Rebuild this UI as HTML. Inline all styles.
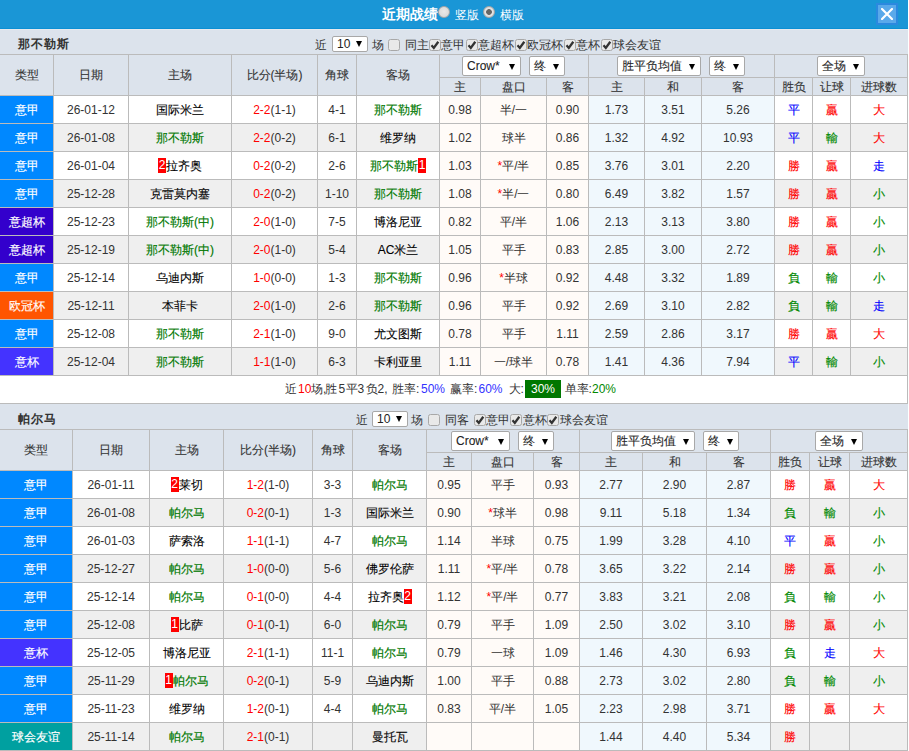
<!DOCTYPE html><html><head><meta charset="utf-8"><style>
*{margin:0;padding:0;box-sizing:border-box}
html,body{width:909px;height:751px;overflow:hidden;background:#fff}
body{position:relative;font-family:"Liberation Sans",sans-serif;font-size:12px;color:#333}
#topbar{position:absolute;left:0;top:0;width:908px;height:29px;background:#1a96d6;border-bottom:1px solid #0b8fd4}
#ttl{position:absolute;left:382px;top:5px;font-size:14px;font-weight:bold;color:#fff;line-height:18px}
.rad{position:absolute;top:6px;width:12px;height:12px;border-radius:50%;background:radial-gradient(circle at 50% 45%,#e8e8e8,#d4d4d4);border:1px solid #a6a6a6;}
.rad.on{background:radial-gradient(circle,#666 0,#666 2.5px,#e6e6e6 3.2px,#d0d0d0 6px)}
.rl{position:absolute;top:8px;color:#fff;font-size:12px;line-height:14px}
#close{position:absolute;left:876px;top:3px;width:22px;height:22px;background:#5aa9ea;border:2px solid #2b89df}
#close svg{position:absolute;left:3px;top:3px}
.tbar{position:absolute;left:0;width:908px;height:25px;background:#dce3ec;border-top:1px solid #e6e9ee}
.tn{position:absolute;left:18px;font-size:12px;letter-spacing:1px;font-weight:bold;color:#333;line-height:16px}
.bt{position:absolute;line-height:16px;color:#333;white-space:nowrap}
.ctl{position:absolute;top:6px;white-space:nowrap;line-height:16px;color:#333}
.grid{position:absolute;background:#bbbbbb}
.c{position:absolute;text-align:center;white-space:nowrap;overflow:hidden}
.h{color:#333;-webkit-text-stroke:0.1px #333}
.res span{-webkit-text-stroke:0.15px currentColor}
.hs{}
.sel{display:inline-block;position:relative;height:20px;background:#fff;border:1px solid #a8a8a8;border-radius:2px;text-align:left;line-height:18px;color:#222;flex:none}
.sel .st{position:absolute;left:4px;top:0}
.sel .ar{position:absolute;right:5px;top:7px;width:0;height:0;border-left:3.5px solid transparent;border-right:3.5px solid transparent;border-top:6px solid #000}
.sel.sm{height:16px;margin:0;line-height:14px}
.sel.sm .ar{top:4px;right:5px}
.cbw{position:absolute;width:12px;height:12px}.cbw svg{display:block}
.cb{display:inline-block;width:12px;height:12px;border:1px solid #a9a9a9;border-radius:2px;background:#e8e8e8;vertical-align:-1px;position:relative}
.cb.on::after{content:"";position:absolute;left:3px;top:0px;width:4px;height:7px;border-right:2px solid #333;border-bottom:2px solid #333;transform:rotate(40deg)}
.d{color:#333}
.ty{color:#fff;-webkit-text-stroke:0.15px #fff}
.tm{color:#000;-webkit-text-stroke:0.1px #000}
.tm .rc{-webkit-text-stroke:0}
.gr{color:#007800;-webkit-text-stroke:0.15px #007800}
.rc{display:inline-block;background:#f00;color:#fff;width:8px;height:15px;line-height:15px;text-align:center;vertical-align:middle;font-size:12px;position:relative;top:-1px}
.sr{color:#f00}
.ast{color:#f00}
.sum{position:absolute;left:0;width:908px;height:27px;color:#333;border-right:1px solid #bbbbbb}
.sum span{position:absolute;top:5px;line-height:16px;white-space:nowrap}
.bl{color:#3333ff}
.gt{color:#008800}
.sum .gb{background:#007700;color:#fff;top:4px;width:36px;height:18px;line-height:18px;text-align:center}
</style></head><body><div id="topbar"><div id="ttl">近期战绩</div><span class="rad" style="left:438px"></span><span class="rl" style="left:455px">竖版</span><span class="rad on" style="left:483px"></span><span class="rl" style="left:500px">横版</span><div id="close"><svg width="12" height="12" viewBox="0 0 12 12"><path d="M1 1L11 11M11 1L1 11" stroke="#fff" stroke-width="2.2" stroke-linecap="round"/></svg></div></div>
<div class="tbar" style="top:29px;height:25px;"><div class="tn" style="top:6px">那不勒斯</div><span class="bt" style="left:315px;top:7px">近</span><span class="sel sm" style="left:332px;top:6px;width:36px;position:absolute"><span class="st">10</span><span class="ar"></span></span><span class="bt" style="left:372px;top:7px">场</span><span class="cbw" style="left:388px;top:9px"><svg class="cbs" width="12" height="12" viewBox="0 0 12 12"><rect x="0.5" y="0.5" width="11" height="11" rx="2" fill="#e9e9e9" stroke="#a8a8a8"/></svg></span><span class="bt" style="left:405px;top:7px">同主</span><span class="cbw" style="left:429px;top:9px"><svg class="cbs" width="12" height="12" viewBox="0 0 12 12"><rect x="0.5" y="0.5" width="11" height="11" rx="2" fill="#e9e9e9" stroke="#a8a8a8"/><path d="M2.5 6.3L4.8 8.9L9.3 2.8" stroke="#333" stroke-width="2.3" fill="none"/></svg></span><span class="bt" style="left:441px;top:7px">意甲</span><span class="cbw" style="left:466px;top:9px"><svg class="cbs" width="12" height="12" viewBox="0 0 12 12"><rect x="0.5" y="0.5" width="11" height="11" rx="2" fill="#e9e9e9" stroke="#a8a8a8"/><path d="M2.5 6.3L4.8 8.9L9.3 2.8" stroke="#333" stroke-width="2.3" fill="none"/></svg></span><span class="bt" style="left:478px;top:7px">意超杯</span><span class="cbw" style="left:515px;top:9px"><svg class="cbs" width="12" height="12" viewBox="0 0 12 12"><rect x="0.5" y="0.5" width="11" height="11" rx="2" fill="#e9e9e9" stroke="#a8a8a8"/><path d="M2.5 6.3L4.8 8.9L9.3 2.8" stroke="#333" stroke-width="2.3" fill="none"/></svg></span><span class="bt" style="left:527px;top:7px">欧冠杯</span><span class="cbw" style="left:564px;top:9px"><svg class="cbs" width="12" height="12" viewBox="0 0 12 12"><rect x="0.5" y="0.5" width="11" height="11" rx="2" fill="#e9e9e9" stroke="#a8a8a8"/><path d="M2.5 6.3L4.8 8.9L9.3 2.8" stroke="#333" stroke-width="2.3" fill="none"/></svg></span><span class="bt" style="left:576px;top:7px">意杯</span><span class="cbw" style="left:601px;top:9px"><svg class="cbs" width="12" height="12" viewBox="0 0 12 12"><rect x="0.5" y="0.5" width="11" height="11" rx="2" fill="#e9e9e9" stroke="#a8a8a8"/><path d="M2.5 6.3L4.8 8.9L9.3 2.8" stroke="#333" stroke-width="2.3" fill="none"/></svg></span><span class="bt" style="left:613px;top:7px">球会友谊</span></div>
<div class="grid" style="left:0;top:54px;width:908px;height:322px"></div>
<div class="c h" style="left:0px;top:55px;width:53px;height:40px;line-height:40px;background:#dce3ec;">类型</div>
<div class="c h" style="left:54px;top:55px;width:74px;height:40px;line-height:40px;background:#dce3ec;">日期</div>
<div class="c h" style="left:129px;top:55px;width:102px;height:40px;line-height:40px;background:#dce3ec;">主场</div>
<div class="c h" style="left:232px;top:55px;width:85px;height:40px;line-height:40px;background:#dce3ec;">比分(半场)</div>
<div class="c h" style="left:318px;top:55px;width:38px;height:40px;line-height:40px;background:#dce3ec;">角球</div>
<div class="c h" style="left:357px;top:55px;width:82px;height:40px;line-height:40px;background:#dce3ec;">客场</div>
<div class="c h hs" style="left:440px;top:55px;width:148px;height:22px;line-height:24px;background:#dce3ec;"><div style="position:absolute;left:22px;top:1px;display:flex;gap:8px"><span class="sel" style="width:59px"><span class="st">Crow*</span><span class="ar"></span></span><span class="sel" style="width:36px"><span class="st">终</span><span class="ar"></span></span></div></div>
<div class="c h hs" style="left:589px;top:55px;width:185px;height:22px;line-height:24px;background:#dce3ec;"><div style="position:absolute;left:28px;top:1px;display:flex;gap:8px"><span class="sel" style="width:84px"><span class="st">胜平负均值</span><span class="ar"></span></span><span class="sel" style="width:36px"><span class="st">终</span><span class="ar"></span></span></div></div>
<div class="c h hs" style="left:775px;top:55px;width:132px;height:22px;line-height:24px;background:#dce3ec;"><div style="position:absolute;left:42px;top:1px;display:flex;gap:8px"><span class="sel" style="width:48px"><span class="st">全场</span><span class="ar"></span></span></div></div>
<div class="c h" style="left:440px;top:78px;width:40px;height:17px;line-height:19px;background:#dce3ec;">主</div>
<div class="c h" style="left:481px;top:78px;width:65px;height:17px;line-height:19px;background:#dce3ec;">盘口</div>
<div class="c h" style="left:547px;top:78px;width:41px;height:17px;line-height:19px;background:#dce3ec;">客</div>
<div class="c h" style="left:589px;top:78px;width:55px;height:17px;line-height:19px;background:#dce3ec;">主</div>
<div class="c h" style="left:645px;top:78px;width:56px;height:17px;line-height:19px;background:#dce3ec;">和</div>
<div class="c h" style="left:702px;top:78px;width:72px;height:17px;line-height:19px;background:#dce3ec;">客</div>
<div class="c h" style="left:775px;top:78px;width:37px;height:17px;line-height:19px;background:#dce3ec;">胜负</div>
<div class="c h" style="left:813px;top:78px;width:37px;height:17px;line-height:19px;background:#dce3ec;">让球</div>
<div class="c h" style="left:851px;top:78px;width:56px;height:17px;line-height:19px;background:#dce3ec;">进球数</div>
<div class="c d ty" style="left:0px;top:96px;width:53px;height:27px;line-height:29px;background:#0088ff;">意甲</div>
<div class="c d" style="left:54px;top:96px;width:74px;height:27px;line-height:29px;background:#ffffff;">26-01-12</div>
<div class="c d tm" style="left:129px;top:96px;width:102px;height:27px;line-height:29px;background:#ffffff;"><span>国际米兰</span></div>
<div class="c d" style="left:232px;top:96px;width:85px;height:27px;line-height:29px;background:#ffffff;"><span class="sr">2-2</span>(1-1)</div>
<div class="c d" style="left:318px;top:96px;width:38px;height:27px;line-height:29px;background:#ffffff;">4-1</div>
<div class="c d tm" style="left:357px;top:96px;width:82px;height:27px;line-height:29px;background:#ffffff;"><span class="gr">那不勒斯</span></div>
<div class="c d" style="left:440px;top:96px;width:40px;height:27px;line-height:29px;background:#fffbf8;">0.98</div>
<div class="c d" style="left:481px;top:96px;width:65px;height:27px;line-height:29px;background:#fffbf8;">半/一</div>
<div class="c d" style="left:547px;top:96px;width:41px;height:27px;line-height:29px;background:#fffbf8;">0.90</div>
<div class="c d" style="left:589px;top:96px;width:55px;height:27px;line-height:29px;background:#f0f8fd;">1.73</div>
<div class="c d" style="left:645px;top:96px;width:56px;height:27px;line-height:29px;background:#f0f8fd;">3.51</div>
<div class="c d" style="left:702px;top:96px;width:72px;height:27px;line-height:29px;background:#f0f8fd;">5.26</div>
<div class="c d res" style="left:775px;top:96px;width:37px;height:27px;line-height:29px;background:#ffffff;"><span style="color:#0000ff">平</span></div>
<div class="c d res" style="left:813px;top:96px;width:37px;height:27px;line-height:29px;background:#ffffff;"><span style="color:#ff0000">贏</span></div>
<div class="c d res" style="left:851px;top:96px;width:56px;height:27px;line-height:29px;background:#ffffff;"><span style="color:#ff0000">大</span></div>
<div class="c d ty" style="left:0px;top:124px;width:53px;height:27px;line-height:29px;background:#0088ff;">意甲</div>
<div class="c d" style="left:54px;top:124px;width:74px;height:27px;line-height:29px;background:#efefef;">26-01-08</div>
<div class="c d tm" style="left:129px;top:124px;width:102px;height:27px;line-height:29px;background:#efefef;"><span class="gr">那不勒斯</span></div>
<div class="c d" style="left:232px;top:124px;width:85px;height:27px;line-height:29px;background:#efefef;"><span class="sr">2-2</span>(0-2)</div>
<div class="c d" style="left:318px;top:124px;width:38px;height:27px;line-height:29px;background:#efefef;">6-1</div>
<div class="c d tm" style="left:357px;top:124px;width:82px;height:27px;line-height:29px;background:#efefef;"><span>维罗纳</span></div>
<div class="c d" style="left:440px;top:124px;width:40px;height:27px;line-height:29px;background:#fffbf8;">1.02</div>
<div class="c d" style="left:481px;top:124px;width:65px;height:27px;line-height:29px;background:#fffbf8;">球半</div>
<div class="c d" style="left:547px;top:124px;width:41px;height:27px;line-height:29px;background:#fffbf8;">0.86</div>
<div class="c d" style="left:589px;top:124px;width:55px;height:27px;line-height:29px;background:#f0f8fd;">1.32</div>
<div class="c d" style="left:645px;top:124px;width:56px;height:27px;line-height:29px;background:#f0f8fd;">4.92</div>
<div class="c d" style="left:702px;top:124px;width:72px;height:27px;line-height:29px;background:#f0f8fd;">10.93</div>
<div class="c d res" style="left:775px;top:124px;width:37px;height:27px;line-height:29px;background:#efefef;"><span style="color:#0000ff">平</span></div>
<div class="c d res" style="left:813px;top:124px;width:37px;height:27px;line-height:29px;background:#efefef;"><span style="color:#008800">輸</span></div>
<div class="c d res" style="left:851px;top:124px;width:56px;height:27px;line-height:29px;background:#efefef;"><span style="color:#ff0000">大</span></div>
<div class="c d ty" style="left:0px;top:152px;width:53px;height:27px;line-height:29px;background:#0088ff;">意甲</div>
<div class="c d" style="left:54px;top:152px;width:74px;height:27px;line-height:29px;background:#ffffff;">26-01-04</div>
<div class="c d tm" style="left:129px;top:152px;width:102px;height:27px;line-height:29px;background:#ffffff;"><span class="rc">2</span><span>拉齐奥</span></div>
<div class="c d" style="left:232px;top:152px;width:85px;height:27px;line-height:29px;background:#ffffff;"><span class="sr">0-2</span>(0-2)</div>
<div class="c d" style="left:318px;top:152px;width:38px;height:27px;line-height:29px;background:#ffffff;">2-6</div>
<div class="c d tm" style="left:357px;top:152px;width:82px;height:27px;line-height:29px;background:#ffffff;"><span class="gr">那不勒斯</span><span class="rc">1</span></div>
<div class="c d" style="left:440px;top:152px;width:40px;height:27px;line-height:29px;background:#fffbf8;">1.03</div>
<div class="c d" style="left:481px;top:152px;width:65px;height:27px;line-height:29px;background:#fffbf8;"><span class="ast">*</span>平/半</div>
<div class="c d" style="left:547px;top:152px;width:41px;height:27px;line-height:29px;background:#fffbf8;">0.85</div>
<div class="c d" style="left:589px;top:152px;width:55px;height:27px;line-height:29px;background:#f0f8fd;">3.76</div>
<div class="c d" style="left:645px;top:152px;width:56px;height:27px;line-height:29px;background:#f0f8fd;">3.01</div>
<div class="c d" style="left:702px;top:152px;width:72px;height:27px;line-height:29px;background:#f0f8fd;">2.20</div>
<div class="c d res" style="left:775px;top:152px;width:37px;height:27px;line-height:29px;background:#ffffff;"><span style="color:#ff0000">勝</span></div>
<div class="c d res" style="left:813px;top:152px;width:37px;height:27px;line-height:29px;background:#ffffff;"><span style="color:#ff0000">贏</span></div>
<div class="c d res" style="left:851px;top:152px;width:56px;height:27px;line-height:29px;background:#ffffff;"><span style="color:#0000ff">走</span></div>
<div class="c d ty" style="left:0px;top:180px;width:53px;height:27px;line-height:29px;background:#0088ff;">意甲</div>
<div class="c d" style="left:54px;top:180px;width:74px;height:27px;line-height:29px;background:#efefef;">25-12-28</div>
<div class="c d tm" style="left:129px;top:180px;width:102px;height:27px;line-height:29px;background:#efefef;"><span>克雷莫内塞</span></div>
<div class="c d" style="left:232px;top:180px;width:85px;height:27px;line-height:29px;background:#efefef;"><span class="sr">0-2</span>(0-2)</div>
<div class="c d" style="left:318px;top:180px;width:38px;height:27px;line-height:29px;background:#efefef;">1-10</div>
<div class="c d tm" style="left:357px;top:180px;width:82px;height:27px;line-height:29px;background:#efefef;"><span class="gr">那不勒斯</span></div>
<div class="c d" style="left:440px;top:180px;width:40px;height:27px;line-height:29px;background:#fffbf8;">1.08</div>
<div class="c d" style="left:481px;top:180px;width:65px;height:27px;line-height:29px;background:#fffbf8;"><span class="ast">*</span>半/一</div>
<div class="c d" style="left:547px;top:180px;width:41px;height:27px;line-height:29px;background:#fffbf8;">0.80</div>
<div class="c d" style="left:589px;top:180px;width:55px;height:27px;line-height:29px;background:#f0f8fd;">6.49</div>
<div class="c d" style="left:645px;top:180px;width:56px;height:27px;line-height:29px;background:#f0f8fd;">3.82</div>
<div class="c d" style="left:702px;top:180px;width:72px;height:27px;line-height:29px;background:#f0f8fd;">1.57</div>
<div class="c d res" style="left:775px;top:180px;width:37px;height:27px;line-height:29px;background:#efefef;"><span style="color:#ff0000">勝</span></div>
<div class="c d res" style="left:813px;top:180px;width:37px;height:27px;line-height:29px;background:#efefef;"><span style="color:#ff0000">贏</span></div>
<div class="c d res" style="left:851px;top:180px;width:56px;height:27px;line-height:29px;background:#efefef;"><span style="color:#008800">小</span></div>
<div class="c d ty" style="left:0px;top:208px;width:53px;height:27px;line-height:29px;background:#3300cc;">意超杯</div>
<div class="c d" style="left:54px;top:208px;width:74px;height:27px;line-height:29px;background:#ffffff;">25-12-23</div>
<div class="c d tm" style="left:129px;top:208px;width:102px;height:27px;line-height:29px;background:#ffffff;"><span class="gr">那不勒斯(中)</span></div>
<div class="c d" style="left:232px;top:208px;width:85px;height:27px;line-height:29px;background:#ffffff;"><span class="sr">2-0</span>(1-0)</div>
<div class="c d" style="left:318px;top:208px;width:38px;height:27px;line-height:29px;background:#ffffff;">7-5</div>
<div class="c d tm" style="left:357px;top:208px;width:82px;height:27px;line-height:29px;background:#ffffff;"><span>博洛尼亚</span></div>
<div class="c d" style="left:440px;top:208px;width:40px;height:27px;line-height:29px;background:#fffbf8;">0.82</div>
<div class="c d" style="left:481px;top:208px;width:65px;height:27px;line-height:29px;background:#fffbf8;">平/半</div>
<div class="c d" style="left:547px;top:208px;width:41px;height:27px;line-height:29px;background:#fffbf8;">1.06</div>
<div class="c d" style="left:589px;top:208px;width:55px;height:27px;line-height:29px;background:#f0f8fd;">2.13</div>
<div class="c d" style="left:645px;top:208px;width:56px;height:27px;line-height:29px;background:#f0f8fd;">3.13</div>
<div class="c d" style="left:702px;top:208px;width:72px;height:27px;line-height:29px;background:#f0f8fd;">3.80</div>
<div class="c d res" style="left:775px;top:208px;width:37px;height:27px;line-height:29px;background:#ffffff;"><span style="color:#ff0000">勝</span></div>
<div class="c d res" style="left:813px;top:208px;width:37px;height:27px;line-height:29px;background:#ffffff;"><span style="color:#ff0000">贏</span></div>
<div class="c d res" style="left:851px;top:208px;width:56px;height:27px;line-height:29px;background:#ffffff;"><span style="color:#008800">小</span></div>
<div class="c d ty" style="left:0px;top:236px;width:53px;height:27px;line-height:29px;background:#3300cc;">意超杯</div>
<div class="c d" style="left:54px;top:236px;width:74px;height:27px;line-height:29px;background:#efefef;">25-12-19</div>
<div class="c d tm" style="left:129px;top:236px;width:102px;height:27px;line-height:29px;background:#efefef;"><span class="gr">那不勒斯(中)</span></div>
<div class="c d" style="left:232px;top:236px;width:85px;height:27px;line-height:29px;background:#efefef;"><span class="sr">2-0</span>(1-0)</div>
<div class="c d" style="left:318px;top:236px;width:38px;height:27px;line-height:29px;background:#efefef;">5-4</div>
<div class="c d tm" style="left:357px;top:236px;width:82px;height:27px;line-height:29px;background:#efefef;"><span>AC米兰</span></div>
<div class="c d" style="left:440px;top:236px;width:40px;height:27px;line-height:29px;background:#fffbf8;">1.05</div>
<div class="c d" style="left:481px;top:236px;width:65px;height:27px;line-height:29px;background:#fffbf8;">平手</div>
<div class="c d" style="left:547px;top:236px;width:41px;height:27px;line-height:29px;background:#fffbf8;">0.83</div>
<div class="c d" style="left:589px;top:236px;width:55px;height:27px;line-height:29px;background:#f0f8fd;">2.85</div>
<div class="c d" style="left:645px;top:236px;width:56px;height:27px;line-height:29px;background:#f0f8fd;">3.00</div>
<div class="c d" style="left:702px;top:236px;width:72px;height:27px;line-height:29px;background:#f0f8fd;">2.72</div>
<div class="c d res" style="left:775px;top:236px;width:37px;height:27px;line-height:29px;background:#efefef;"><span style="color:#ff0000">勝</span></div>
<div class="c d res" style="left:813px;top:236px;width:37px;height:27px;line-height:29px;background:#efefef;"><span style="color:#ff0000">贏</span></div>
<div class="c d res" style="left:851px;top:236px;width:56px;height:27px;line-height:29px;background:#efefef;"><span style="color:#008800">小</span></div>
<div class="c d ty" style="left:0px;top:264px;width:53px;height:27px;line-height:29px;background:#0088ff;">意甲</div>
<div class="c d" style="left:54px;top:264px;width:74px;height:27px;line-height:29px;background:#ffffff;">25-12-14</div>
<div class="c d tm" style="left:129px;top:264px;width:102px;height:27px;line-height:29px;background:#ffffff;"><span>乌迪内斯</span></div>
<div class="c d" style="left:232px;top:264px;width:85px;height:27px;line-height:29px;background:#ffffff;"><span class="sr">1-0</span>(0-0)</div>
<div class="c d" style="left:318px;top:264px;width:38px;height:27px;line-height:29px;background:#ffffff;">1-3</div>
<div class="c d tm" style="left:357px;top:264px;width:82px;height:27px;line-height:29px;background:#ffffff;"><span class="gr">那不勒斯</span></div>
<div class="c d" style="left:440px;top:264px;width:40px;height:27px;line-height:29px;background:#fffbf8;">0.96</div>
<div class="c d" style="left:481px;top:264px;width:65px;height:27px;line-height:29px;background:#fffbf8;"><span class="ast">*</span>半球</div>
<div class="c d" style="left:547px;top:264px;width:41px;height:27px;line-height:29px;background:#fffbf8;">0.92</div>
<div class="c d" style="left:589px;top:264px;width:55px;height:27px;line-height:29px;background:#f0f8fd;">4.48</div>
<div class="c d" style="left:645px;top:264px;width:56px;height:27px;line-height:29px;background:#f0f8fd;">3.32</div>
<div class="c d" style="left:702px;top:264px;width:72px;height:27px;line-height:29px;background:#f0f8fd;">1.89</div>
<div class="c d res" style="left:775px;top:264px;width:37px;height:27px;line-height:29px;background:#ffffff;"><span style="color:#008800">負</span></div>
<div class="c d res" style="left:813px;top:264px;width:37px;height:27px;line-height:29px;background:#ffffff;"><span style="color:#008800">輸</span></div>
<div class="c d res" style="left:851px;top:264px;width:56px;height:27px;line-height:29px;background:#ffffff;"><span style="color:#008800">小</span></div>
<div class="c d ty" style="left:0px;top:292px;width:53px;height:27px;line-height:29px;background:#ff5500;">欧冠杯</div>
<div class="c d" style="left:54px;top:292px;width:74px;height:27px;line-height:29px;background:#efefef;">25-12-11</div>
<div class="c d tm" style="left:129px;top:292px;width:102px;height:27px;line-height:29px;background:#efefef;"><span>本菲卡</span></div>
<div class="c d" style="left:232px;top:292px;width:85px;height:27px;line-height:29px;background:#efefef;"><span class="sr">2-0</span>(1-0)</div>
<div class="c d" style="left:318px;top:292px;width:38px;height:27px;line-height:29px;background:#efefef;">2-6</div>
<div class="c d tm" style="left:357px;top:292px;width:82px;height:27px;line-height:29px;background:#efefef;"><span class="gr">那不勒斯</span></div>
<div class="c d" style="left:440px;top:292px;width:40px;height:27px;line-height:29px;background:#fffbf8;">0.96</div>
<div class="c d" style="left:481px;top:292px;width:65px;height:27px;line-height:29px;background:#fffbf8;">平手</div>
<div class="c d" style="left:547px;top:292px;width:41px;height:27px;line-height:29px;background:#fffbf8;">0.92</div>
<div class="c d" style="left:589px;top:292px;width:55px;height:27px;line-height:29px;background:#f0f8fd;">2.69</div>
<div class="c d" style="left:645px;top:292px;width:56px;height:27px;line-height:29px;background:#f0f8fd;">3.10</div>
<div class="c d" style="left:702px;top:292px;width:72px;height:27px;line-height:29px;background:#f0f8fd;">2.82</div>
<div class="c d res" style="left:775px;top:292px;width:37px;height:27px;line-height:29px;background:#efefef;"><span style="color:#008800">負</span></div>
<div class="c d res" style="left:813px;top:292px;width:37px;height:27px;line-height:29px;background:#efefef;"><span style="color:#008800">輸</span></div>
<div class="c d res" style="left:851px;top:292px;width:56px;height:27px;line-height:29px;background:#efefef;"><span style="color:#0000ff">走</span></div>
<div class="c d ty" style="left:0px;top:320px;width:53px;height:27px;line-height:29px;background:#0088ff;">意甲</div>
<div class="c d" style="left:54px;top:320px;width:74px;height:27px;line-height:29px;background:#ffffff;">25-12-08</div>
<div class="c d tm" style="left:129px;top:320px;width:102px;height:27px;line-height:29px;background:#ffffff;"><span class="gr">那不勒斯</span></div>
<div class="c d" style="left:232px;top:320px;width:85px;height:27px;line-height:29px;background:#ffffff;"><span class="sr">2-1</span>(1-0)</div>
<div class="c d" style="left:318px;top:320px;width:38px;height:27px;line-height:29px;background:#ffffff;">9-0</div>
<div class="c d tm" style="left:357px;top:320px;width:82px;height:27px;line-height:29px;background:#ffffff;"><span>尤文图斯</span></div>
<div class="c d" style="left:440px;top:320px;width:40px;height:27px;line-height:29px;background:#fffbf8;">0.78</div>
<div class="c d" style="left:481px;top:320px;width:65px;height:27px;line-height:29px;background:#fffbf8;">平手</div>
<div class="c d" style="left:547px;top:320px;width:41px;height:27px;line-height:29px;background:#fffbf8;">1.11</div>
<div class="c d" style="left:589px;top:320px;width:55px;height:27px;line-height:29px;background:#f0f8fd;">2.59</div>
<div class="c d" style="left:645px;top:320px;width:56px;height:27px;line-height:29px;background:#f0f8fd;">2.86</div>
<div class="c d" style="left:702px;top:320px;width:72px;height:27px;line-height:29px;background:#f0f8fd;">3.17</div>
<div class="c d res" style="left:775px;top:320px;width:37px;height:27px;line-height:29px;background:#ffffff;"><span style="color:#ff0000">勝</span></div>
<div class="c d res" style="left:813px;top:320px;width:37px;height:27px;line-height:29px;background:#ffffff;"><span style="color:#ff0000">贏</span></div>
<div class="c d res" style="left:851px;top:320px;width:56px;height:27px;line-height:29px;background:#ffffff;"><span style="color:#ff0000">大</span></div>
<div class="c d ty" style="left:0px;top:348px;width:53px;height:27px;line-height:29px;background:#4433ff;">意杯</div>
<div class="c d" style="left:54px;top:348px;width:74px;height:27px;line-height:29px;background:#efefef;">25-12-04</div>
<div class="c d tm" style="left:129px;top:348px;width:102px;height:27px;line-height:29px;background:#efefef;"><span class="gr">那不勒斯</span></div>
<div class="c d" style="left:232px;top:348px;width:85px;height:27px;line-height:29px;background:#efefef;"><span class="sr">1-1</span>(1-0)</div>
<div class="c d" style="left:318px;top:348px;width:38px;height:27px;line-height:29px;background:#efefef;">6-3</div>
<div class="c d tm" style="left:357px;top:348px;width:82px;height:27px;line-height:29px;background:#efefef;"><span>卡利亚里</span></div>
<div class="c d" style="left:440px;top:348px;width:40px;height:27px;line-height:29px;background:#fffbf8;">1.11</div>
<div class="c d" style="left:481px;top:348px;width:65px;height:27px;line-height:29px;background:#fffbf8;">一/球半</div>
<div class="c d" style="left:547px;top:348px;width:41px;height:27px;line-height:29px;background:#fffbf8;">0.78</div>
<div class="c d" style="left:589px;top:348px;width:55px;height:27px;line-height:29px;background:#f0f8fd;">1.41</div>
<div class="c d" style="left:645px;top:348px;width:56px;height:27px;line-height:29px;background:#f0f8fd;">4.36</div>
<div class="c d" style="left:702px;top:348px;width:72px;height:27px;line-height:29px;background:#f0f8fd;">7.94</div>
<div class="c d res" style="left:775px;top:348px;width:37px;height:27px;line-height:29px;background:#efefef;"><span style="color:#0000ff">平</span></div>
<div class="c d res" style="left:813px;top:348px;width:37px;height:27px;line-height:29px;background:#efefef;"><span style="color:#008800">輸</span></div>
<div class="c d res" style="left:851px;top:348px;width:56px;height:27px;line-height:29px;background:#efefef;"><span style="color:#008800">小</span></div>
<div class="sum" style="top:376px"><span style="left:285px;">近</span><span style="left:298px;color:#f00">10</span><span style="left:311px;">场,</span><span style="left:325px;">胜</span><span style="left:338.5px;">5</span><span style="left:346px;">平</span><span style="left:357.5px;">3</span><span style="left:365.5px;">负</span><span style="left:377.5px;">2,</span><span style="left:392px;">胜率:</span><span style="left:421px;color:#3333ff">50%</span><span style="left:450px;">赢率:</span><span style="left:478.5px;color:#3333ff">60%</span><span style="left:508.5px;">大:</span><span style="left:592px;color:#008800">20%</span><span style="left:564.5px;">单率:</span><span class="gb" style="left:525px">30%</span></div>
<div class="tbar" style="top:403px;height:26px;border-top:1px solid #bbbbbb"><div class="tn" style="top:7px">帕尔马</div><span class="bt" style="left:356px;top:8px">近</span><span class="sel sm" style="left:372px;top:7px;width:36px;position:absolute"><span class="st">10</span><span class="ar"></span></span><span class="bt" style="left:411px;top:8px">场</span><span class="cbw" style="left:428px;top:10px"><svg class="cbs" width="12" height="12" viewBox="0 0 12 12"><rect x="0.5" y="0.5" width="11" height="11" rx="2" fill="#e9e9e9" stroke="#a8a8a8"/></svg></span><span class="bt" style="left:445px;top:8px">同客</span><span class="cbw" style="left:474px;top:10px"><svg class="cbs" width="12" height="12" viewBox="0 0 12 12"><rect x="0.5" y="0.5" width="11" height="11" rx="2" fill="#e9e9e9" stroke="#a8a8a8"/><path d="M2.5 6.3L4.8 8.9L9.3 2.8" stroke="#333" stroke-width="2.3" fill="none"/></svg></span><span class="bt" style="left:486px;top:8px">意甲</span><span class="cbw" style="left:510px;top:10px"><svg class="cbs" width="12" height="12" viewBox="0 0 12 12"><rect x="0.5" y="0.5" width="11" height="11" rx="2" fill="#e9e9e9" stroke="#a8a8a8"/><path d="M2.5 6.3L4.8 8.9L9.3 2.8" stroke="#333" stroke-width="2.3" fill="none"/></svg></span><span class="bt" style="left:523px;top:8px">意杯</span><span class="cbw" style="left:547px;top:10px"><svg class="cbs" width="12" height="12" viewBox="0 0 12 12"><rect x="0.5" y="0.5" width="11" height="11" rx="2" fill="#e9e9e9" stroke="#a8a8a8"/><path d="M2.5 6.3L4.8 8.9L9.3 2.8" stroke="#333" stroke-width="2.3" fill="none"/></svg></span><span class="bt" style="left:560px;top:8px">球会友谊</span></div>
<div class="grid" style="left:0;top:429px;width:908px;height:322px"></div>
<div class="c h" style="left:0px;top:430px;width:72px;height:40px;line-height:40px;background:#dce3ec;">类型</div>
<div class="c h" style="left:73px;top:430px;width:76px;height:40px;line-height:40px;background:#dce3ec;">日期</div>
<div class="c h" style="left:150px;top:430px;width:73px;height:40px;line-height:40px;background:#dce3ec;">主场</div>
<div class="c h" style="left:224px;top:430px;width:88px;height:40px;line-height:40px;background:#dce3ec;">比分(半场)</div>
<div class="c h" style="left:313px;top:430px;width:39px;height:40px;line-height:40px;background:#dce3ec;">角球</div>
<div class="c h" style="left:353px;top:430px;width:73px;height:40px;line-height:40px;background:#dce3ec;">客场</div>
<div class="c h hs" style="left:427px;top:430px;width:152px;height:22px;line-height:24px;background:#dce3ec;"><div style="position:absolute;left:24px;top:1px;display:flex;gap:8px"><span class="sel" style="width:59px"><span class="st">Crow*</span><span class="ar"></span></span><span class="sel" style="width:36px"><span class="st">终</span><span class="ar"></span></span></div></div>
<div class="c h hs" style="left:580px;top:430px;width:190px;height:22px;line-height:24px;background:#dce3ec;"><div style="position:absolute;left:31px;top:1px;display:flex;gap:8px"><span class="sel" style="width:84px"><span class="st">胜平负均值</span><span class="ar"></span></span><span class="sel" style="width:36px"><span class="st">终</span><span class="ar"></span></span></div></div>
<div class="c h hs" style="left:771px;top:430px;width:136px;height:22px;line-height:24px;background:#dce3ec;"><div style="position:absolute;left:44px;top:1px;display:flex;gap:8px"><span class="sel" style="width:48px"><span class="st">全场</span><span class="ar"></span></span></div></div>
<div class="c h" style="left:427px;top:453px;width:44px;height:17px;line-height:19px;background:#dce3ec;">主</div>
<div class="c h" style="left:472px;top:453px;width:61px;height:17px;line-height:19px;background:#dce3ec;">盘口</div>
<div class="c h" style="left:534px;top:453px;width:45px;height:17px;line-height:19px;background:#dce3ec;">客</div>
<div class="c h" style="left:580px;top:453px;width:62px;height:17px;line-height:19px;background:#dce3ec;">主</div>
<div class="c h" style="left:643px;top:453px;width:63px;height:17px;line-height:19px;background:#dce3ec;">和</div>
<div class="c h" style="left:707px;top:453px;width:63px;height:17px;line-height:19px;background:#dce3ec;">客</div>
<div class="c h" style="left:771px;top:453px;width:38px;height:17px;line-height:19px;background:#dce3ec;">胜负</div>
<div class="c h" style="left:810px;top:453px;width:39px;height:17px;line-height:19px;background:#dce3ec;">让球</div>
<div class="c h" style="left:850px;top:453px;width:57px;height:17px;line-height:19px;background:#dce3ec;">进球数</div>
<div class="c d ty" style="left:0px;top:471px;width:72px;height:27px;line-height:29px;background:#0088ff;">意甲</div>
<div class="c d" style="left:73px;top:471px;width:76px;height:27px;line-height:29px;background:#ffffff;">26-01-11</div>
<div class="c d tm" style="left:150px;top:471px;width:73px;height:27px;line-height:29px;background:#ffffff;"><span class="rc">2</span><span>莱切</span></div>
<div class="c d" style="left:224px;top:471px;width:88px;height:27px;line-height:29px;background:#ffffff;"><span class="sr">1-2</span>(1-0)</div>
<div class="c d" style="left:313px;top:471px;width:39px;height:27px;line-height:29px;background:#ffffff;">3-3</div>
<div class="c d tm" style="left:353px;top:471px;width:73px;height:27px;line-height:29px;background:#ffffff;"><span class="gr">帕尔马</span></div>
<div class="c d" style="left:427px;top:471px;width:44px;height:27px;line-height:29px;background:#fffbf8;">0.95</div>
<div class="c d" style="left:472px;top:471px;width:61px;height:27px;line-height:29px;background:#fffbf8;">平手</div>
<div class="c d" style="left:534px;top:471px;width:45px;height:27px;line-height:29px;background:#fffbf8;">0.93</div>
<div class="c d" style="left:580px;top:471px;width:62px;height:27px;line-height:29px;background:#f0f8fd;">2.77</div>
<div class="c d" style="left:643px;top:471px;width:63px;height:27px;line-height:29px;background:#f0f8fd;">2.90</div>
<div class="c d" style="left:707px;top:471px;width:63px;height:27px;line-height:29px;background:#f0f8fd;">2.87</div>
<div class="c d res" style="left:771px;top:471px;width:38px;height:27px;line-height:29px;background:#ffffff;"><span style="color:#ff0000">勝</span></div>
<div class="c d res" style="left:810px;top:471px;width:39px;height:27px;line-height:29px;background:#ffffff;"><span style="color:#ff0000">贏</span></div>
<div class="c d res" style="left:850px;top:471px;width:57px;height:27px;line-height:29px;background:#ffffff;"><span style="color:#ff0000">大</span></div>
<div class="c d ty" style="left:0px;top:499px;width:72px;height:27px;line-height:29px;background:#0088ff;">意甲</div>
<div class="c d" style="left:73px;top:499px;width:76px;height:27px;line-height:29px;background:#efefef;">26-01-08</div>
<div class="c d tm" style="left:150px;top:499px;width:73px;height:27px;line-height:29px;background:#efefef;"><span class="gr">帕尔马</span></div>
<div class="c d" style="left:224px;top:499px;width:88px;height:27px;line-height:29px;background:#efefef;"><span class="sr">0-2</span>(0-1)</div>
<div class="c d" style="left:313px;top:499px;width:39px;height:27px;line-height:29px;background:#efefef;">1-3</div>
<div class="c d tm" style="left:353px;top:499px;width:73px;height:27px;line-height:29px;background:#efefef;"><span>国际米兰</span></div>
<div class="c d" style="left:427px;top:499px;width:44px;height:27px;line-height:29px;background:#fffbf8;">0.90</div>
<div class="c d" style="left:472px;top:499px;width:61px;height:27px;line-height:29px;background:#fffbf8;"><span class="ast">*</span>球半</div>
<div class="c d" style="left:534px;top:499px;width:45px;height:27px;line-height:29px;background:#fffbf8;">0.98</div>
<div class="c d" style="left:580px;top:499px;width:62px;height:27px;line-height:29px;background:#f0f8fd;">9.11</div>
<div class="c d" style="left:643px;top:499px;width:63px;height:27px;line-height:29px;background:#f0f8fd;">5.18</div>
<div class="c d" style="left:707px;top:499px;width:63px;height:27px;line-height:29px;background:#f0f8fd;">1.34</div>
<div class="c d res" style="left:771px;top:499px;width:38px;height:27px;line-height:29px;background:#efefef;"><span style="color:#008800">負</span></div>
<div class="c d res" style="left:810px;top:499px;width:39px;height:27px;line-height:29px;background:#efefef;"><span style="color:#008800">輸</span></div>
<div class="c d res" style="left:850px;top:499px;width:57px;height:27px;line-height:29px;background:#efefef;"><span style="color:#008800">小</span></div>
<div class="c d ty" style="left:0px;top:527px;width:72px;height:27px;line-height:29px;background:#0088ff;">意甲</div>
<div class="c d" style="left:73px;top:527px;width:76px;height:27px;line-height:29px;background:#ffffff;">26-01-03</div>
<div class="c d tm" style="left:150px;top:527px;width:73px;height:27px;line-height:29px;background:#ffffff;"><span>萨索洛</span></div>
<div class="c d" style="left:224px;top:527px;width:88px;height:27px;line-height:29px;background:#ffffff;"><span class="sr">1-1</span>(1-1)</div>
<div class="c d" style="left:313px;top:527px;width:39px;height:27px;line-height:29px;background:#ffffff;">4-7</div>
<div class="c d tm" style="left:353px;top:527px;width:73px;height:27px;line-height:29px;background:#ffffff;"><span class="gr">帕尔马</span></div>
<div class="c d" style="left:427px;top:527px;width:44px;height:27px;line-height:29px;background:#fffbf8;">1.14</div>
<div class="c d" style="left:472px;top:527px;width:61px;height:27px;line-height:29px;background:#fffbf8;">半球</div>
<div class="c d" style="left:534px;top:527px;width:45px;height:27px;line-height:29px;background:#fffbf8;">0.75</div>
<div class="c d" style="left:580px;top:527px;width:62px;height:27px;line-height:29px;background:#f0f8fd;">1.99</div>
<div class="c d" style="left:643px;top:527px;width:63px;height:27px;line-height:29px;background:#f0f8fd;">3.28</div>
<div class="c d" style="left:707px;top:527px;width:63px;height:27px;line-height:29px;background:#f0f8fd;">4.10</div>
<div class="c d res" style="left:771px;top:527px;width:38px;height:27px;line-height:29px;background:#ffffff;"><span style="color:#0000ff">平</span></div>
<div class="c d res" style="left:810px;top:527px;width:39px;height:27px;line-height:29px;background:#ffffff;"><span style="color:#ff0000">贏</span></div>
<div class="c d res" style="left:850px;top:527px;width:57px;height:27px;line-height:29px;background:#ffffff;"><span style="color:#008800">小</span></div>
<div class="c d ty" style="left:0px;top:555px;width:72px;height:27px;line-height:29px;background:#0088ff;">意甲</div>
<div class="c d" style="left:73px;top:555px;width:76px;height:27px;line-height:29px;background:#efefef;">25-12-27</div>
<div class="c d tm" style="left:150px;top:555px;width:73px;height:27px;line-height:29px;background:#efefef;"><span class="gr">帕尔马</span></div>
<div class="c d" style="left:224px;top:555px;width:88px;height:27px;line-height:29px;background:#efefef;"><span class="sr">1-0</span>(0-0)</div>
<div class="c d" style="left:313px;top:555px;width:39px;height:27px;line-height:29px;background:#efefef;">5-6</div>
<div class="c d tm" style="left:353px;top:555px;width:73px;height:27px;line-height:29px;background:#efefef;"><span>佛罗伦萨</span></div>
<div class="c d" style="left:427px;top:555px;width:44px;height:27px;line-height:29px;background:#fffbf8;">1.11</div>
<div class="c d" style="left:472px;top:555px;width:61px;height:27px;line-height:29px;background:#fffbf8;"><span class="ast">*</span>平/半</div>
<div class="c d" style="left:534px;top:555px;width:45px;height:27px;line-height:29px;background:#fffbf8;">0.78</div>
<div class="c d" style="left:580px;top:555px;width:62px;height:27px;line-height:29px;background:#f0f8fd;">3.65</div>
<div class="c d" style="left:643px;top:555px;width:63px;height:27px;line-height:29px;background:#f0f8fd;">3.22</div>
<div class="c d" style="left:707px;top:555px;width:63px;height:27px;line-height:29px;background:#f0f8fd;">2.14</div>
<div class="c d res" style="left:771px;top:555px;width:38px;height:27px;line-height:29px;background:#efefef;"><span style="color:#ff0000">勝</span></div>
<div class="c d res" style="left:810px;top:555px;width:39px;height:27px;line-height:29px;background:#efefef;"><span style="color:#ff0000">贏</span></div>
<div class="c d res" style="left:850px;top:555px;width:57px;height:27px;line-height:29px;background:#efefef;"><span style="color:#008800">小</span></div>
<div class="c d ty" style="left:0px;top:583px;width:72px;height:27px;line-height:29px;background:#0088ff;">意甲</div>
<div class="c d" style="left:73px;top:583px;width:76px;height:27px;line-height:29px;background:#ffffff;">25-12-14</div>
<div class="c d tm" style="left:150px;top:583px;width:73px;height:27px;line-height:29px;background:#ffffff;"><span class="gr">帕尔马</span></div>
<div class="c d" style="left:224px;top:583px;width:88px;height:27px;line-height:29px;background:#ffffff;"><span class="sr">0-1</span>(0-0)</div>
<div class="c d" style="left:313px;top:583px;width:39px;height:27px;line-height:29px;background:#ffffff;">4-4</div>
<div class="c d tm" style="left:353px;top:583px;width:73px;height:27px;line-height:29px;background:#ffffff;"><span>拉齐奥</span><span class="rc">2</span></div>
<div class="c d" style="left:427px;top:583px;width:44px;height:27px;line-height:29px;background:#fffbf8;">1.12</div>
<div class="c d" style="left:472px;top:583px;width:61px;height:27px;line-height:29px;background:#fffbf8;"><span class="ast">*</span>平/半</div>
<div class="c d" style="left:534px;top:583px;width:45px;height:27px;line-height:29px;background:#fffbf8;">0.77</div>
<div class="c d" style="left:580px;top:583px;width:62px;height:27px;line-height:29px;background:#f0f8fd;">3.83</div>
<div class="c d" style="left:643px;top:583px;width:63px;height:27px;line-height:29px;background:#f0f8fd;">3.21</div>
<div class="c d" style="left:707px;top:583px;width:63px;height:27px;line-height:29px;background:#f0f8fd;">2.08</div>
<div class="c d res" style="left:771px;top:583px;width:38px;height:27px;line-height:29px;background:#ffffff;"><span style="color:#008800">負</span></div>
<div class="c d res" style="left:810px;top:583px;width:39px;height:27px;line-height:29px;background:#ffffff;"><span style="color:#008800">輸</span></div>
<div class="c d res" style="left:850px;top:583px;width:57px;height:27px;line-height:29px;background:#ffffff;"><span style="color:#008800">小</span></div>
<div class="c d ty" style="left:0px;top:611px;width:72px;height:27px;line-height:29px;background:#0088ff;">意甲</div>
<div class="c d" style="left:73px;top:611px;width:76px;height:27px;line-height:29px;background:#efefef;">25-12-08</div>
<div class="c d tm" style="left:150px;top:611px;width:73px;height:27px;line-height:29px;background:#efefef;"><span class="rc">1</span><span>比萨</span></div>
<div class="c d" style="left:224px;top:611px;width:88px;height:27px;line-height:29px;background:#efefef;"><span class="sr">0-1</span>(0-1)</div>
<div class="c d" style="left:313px;top:611px;width:39px;height:27px;line-height:29px;background:#efefef;">6-0</div>
<div class="c d tm" style="left:353px;top:611px;width:73px;height:27px;line-height:29px;background:#efefef;"><span class="gr">帕尔马</span></div>
<div class="c d" style="left:427px;top:611px;width:44px;height:27px;line-height:29px;background:#fffbf8;">0.79</div>
<div class="c d" style="left:472px;top:611px;width:61px;height:27px;line-height:29px;background:#fffbf8;">平手</div>
<div class="c d" style="left:534px;top:611px;width:45px;height:27px;line-height:29px;background:#fffbf8;">1.09</div>
<div class="c d" style="left:580px;top:611px;width:62px;height:27px;line-height:29px;background:#f0f8fd;">2.50</div>
<div class="c d" style="left:643px;top:611px;width:63px;height:27px;line-height:29px;background:#f0f8fd;">3.02</div>
<div class="c d" style="left:707px;top:611px;width:63px;height:27px;line-height:29px;background:#f0f8fd;">3.10</div>
<div class="c d res" style="left:771px;top:611px;width:38px;height:27px;line-height:29px;background:#efefef;"><span style="color:#ff0000">勝</span></div>
<div class="c d res" style="left:810px;top:611px;width:39px;height:27px;line-height:29px;background:#efefef;"><span style="color:#ff0000">贏</span></div>
<div class="c d res" style="left:850px;top:611px;width:57px;height:27px;line-height:29px;background:#efefef;"><span style="color:#008800">小</span></div>
<div class="c d ty" style="left:0px;top:639px;width:72px;height:27px;line-height:29px;background:#4433ff;">意杯</div>
<div class="c d" style="left:73px;top:639px;width:76px;height:27px;line-height:29px;background:#ffffff;">25-12-05</div>
<div class="c d tm" style="left:150px;top:639px;width:73px;height:27px;line-height:29px;background:#ffffff;"><span>博洛尼亚</span></div>
<div class="c d" style="left:224px;top:639px;width:88px;height:27px;line-height:29px;background:#ffffff;"><span class="sr">2-1</span>(1-1)</div>
<div class="c d" style="left:313px;top:639px;width:39px;height:27px;line-height:29px;background:#ffffff;">11-1</div>
<div class="c d tm" style="left:353px;top:639px;width:73px;height:27px;line-height:29px;background:#ffffff;"><span class="gr">帕尔马</span></div>
<div class="c d" style="left:427px;top:639px;width:44px;height:27px;line-height:29px;background:#fffbf8;">0.79</div>
<div class="c d" style="left:472px;top:639px;width:61px;height:27px;line-height:29px;background:#fffbf8;">一球</div>
<div class="c d" style="left:534px;top:639px;width:45px;height:27px;line-height:29px;background:#fffbf8;">1.09</div>
<div class="c d" style="left:580px;top:639px;width:62px;height:27px;line-height:29px;background:#f0f8fd;">1.46</div>
<div class="c d" style="left:643px;top:639px;width:63px;height:27px;line-height:29px;background:#f0f8fd;">4.30</div>
<div class="c d" style="left:707px;top:639px;width:63px;height:27px;line-height:29px;background:#f0f8fd;">6.93</div>
<div class="c d res" style="left:771px;top:639px;width:38px;height:27px;line-height:29px;background:#ffffff;"><span style="color:#008800">負</span></div>
<div class="c d res" style="left:810px;top:639px;width:39px;height:27px;line-height:29px;background:#ffffff;"><span style="color:#0000ff">走</span></div>
<div class="c d res" style="left:850px;top:639px;width:57px;height:27px;line-height:29px;background:#ffffff;"><span style="color:#ff0000">大</span></div>
<div class="c d ty" style="left:0px;top:667px;width:72px;height:27px;line-height:29px;background:#0088ff;">意甲</div>
<div class="c d" style="left:73px;top:667px;width:76px;height:27px;line-height:29px;background:#efefef;">25-11-29</div>
<div class="c d tm" style="left:150px;top:667px;width:73px;height:27px;line-height:29px;background:#efefef;"><span class="rc">1</span><span class="gr">帕尔马</span></div>
<div class="c d" style="left:224px;top:667px;width:88px;height:27px;line-height:29px;background:#efefef;"><span class="sr">0-2</span>(0-1)</div>
<div class="c d" style="left:313px;top:667px;width:39px;height:27px;line-height:29px;background:#efefef;">5-9</div>
<div class="c d tm" style="left:353px;top:667px;width:73px;height:27px;line-height:29px;background:#efefef;"><span>乌迪内斯</span></div>
<div class="c d" style="left:427px;top:667px;width:44px;height:27px;line-height:29px;background:#fffbf8;">1.00</div>
<div class="c d" style="left:472px;top:667px;width:61px;height:27px;line-height:29px;background:#fffbf8;">平手</div>
<div class="c d" style="left:534px;top:667px;width:45px;height:27px;line-height:29px;background:#fffbf8;">0.88</div>
<div class="c d" style="left:580px;top:667px;width:62px;height:27px;line-height:29px;background:#f0f8fd;">2.73</div>
<div class="c d" style="left:643px;top:667px;width:63px;height:27px;line-height:29px;background:#f0f8fd;">3.02</div>
<div class="c d" style="left:707px;top:667px;width:63px;height:27px;line-height:29px;background:#f0f8fd;">2.80</div>
<div class="c d res" style="left:771px;top:667px;width:38px;height:27px;line-height:29px;background:#efefef;"><span style="color:#008800">負</span></div>
<div class="c d res" style="left:810px;top:667px;width:39px;height:27px;line-height:29px;background:#efefef;"><span style="color:#008800">輸</span></div>
<div class="c d res" style="left:850px;top:667px;width:57px;height:27px;line-height:29px;background:#efefef;"><span style="color:#008800">小</span></div>
<div class="c d ty" style="left:0px;top:695px;width:72px;height:27px;line-height:29px;background:#0088ff;">意甲</div>
<div class="c d" style="left:73px;top:695px;width:76px;height:27px;line-height:29px;background:#ffffff;">25-11-23</div>
<div class="c d tm" style="left:150px;top:695px;width:73px;height:27px;line-height:29px;background:#ffffff;"><span>维罗纳</span></div>
<div class="c d" style="left:224px;top:695px;width:88px;height:27px;line-height:29px;background:#ffffff;"><span class="sr">1-2</span>(0-1)</div>
<div class="c d" style="left:313px;top:695px;width:39px;height:27px;line-height:29px;background:#ffffff;">4-4</div>
<div class="c d tm" style="left:353px;top:695px;width:73px;height:27px;line-height:29px;background:#ffffff;"><span class="gr">帕尔马</span></div>
<div class="c d" style="left:427px;top:695px;width:44px;height:27px;line-height:29px;background:#fffbf8;">0.83</div>
<div class="c d" style="left:472px;top:695px;width:61px;height:27px;line-height:29px;background:#fffbf8;">平/半</div>
<div class="c d" style="left:534px;top:695px;width:45px;height:27px;line-height:29px;background:#fffbf8;">1.05</div>
<div class="c d" style="left:580px;top:695px;width:62px;height:27px;line-height:29px;background:#f0f8fd;">2.23</div>
<div class="c d" style="left:643px;top:695px;width:63px;height:27px;line-height:29px;background:#f0f8fd;">2.98</div>
<div class="c d" style="left:707px;top:695px;width:63px;height:27px;line-height:29px;background:#f0f8fd;">3.71</div>
<div class="c d res" style="left:771px;top:695px;width:38px;height:27px;line-height:29px;background:#ffffff;"><span style="color:#ff0000">勝</span></div>
<div class="c d res" style="left:810px;top:695px;width:39px;height:27px;line-height:29px;background:#ffffff;"><span style="color:#ff0000">贏</span></div>
<div class="c d res" style="left:850px;top:695px;width:57px;height:27px;line-height:29px;background:#ffffff;"><span style="color:#ff0000">大</span></div>
<div class="c d ty" style="left:0px;top:723px;width:72px;height:27px;line-height:29px;background:#00a0a0;">球会友谊</div>
<div class="c d" style="left:73px;top:723px;width:76px;height:27px;line-height:29px;background:#efefef;">25-11-14</div>
<div class="c d tm" style="left:150px;top:723px;width:73px;height:27px;line-height:29px;background:#efefef;"><span class="gr">帕尔马</span></div>
<div class="c d" style="left:224px;top:723px;width:88px;height:27px;line-height:29px;background:#efefef;"><span class="sr">2-1</span>(0-1)</div>
<div class="c d" style="left:313px;top:723px;width:39px;height:27px;line-height:29px;background:#efefef;"></div>
<div class="c d tm" style="left:353px;top:723px;width:73px;height:27px;line-height:29px;background:#efefef;"><span>曼托瓦</span></div>
<div class="c d" style="left:427px;top:723px;width:44px;height:27px;line-height:29px;background:#fffbf8;"></div>
<div class="c d" style="left:472px;top:723px;width:61px;height:27px;line-height:29px;background:#fffbf8;"></div>
<div class="c d" style="left:534px;top:723px;width:45px;height:27px;line-height:29px;background:#fffbf8;"></div>
<div class="c d" style="left:580px;top:723px;width:62px;height:27px;line-height:29px;background:#f0f8fd;">1.44</div>
<div class="c d" style="left:643px;top:723px;width:63px;height:27px;line-height:29px;background:#f0f8fd;">4.40</div>
<div class="c d" style="left:707px;top:723px;width:63px;height:27px;line-height:29px;background:#f0f8fd;">5.34</div>
<div class="c d res" style="left:771px;top:723px;width:38px;height:27px;line-height:29px;background:#efefef;"><span style="color:#ff0000">勝</span></div>
<div class="c d res" style="left:810px;top:723px;width:39px;height:27px;line-height:29px;background:#efefef;"></div>
<div class="c d res" style="left:850px;top:723px;width:57px;height:27px;line-height:29px;background:#efefef;"></div></body></html>
